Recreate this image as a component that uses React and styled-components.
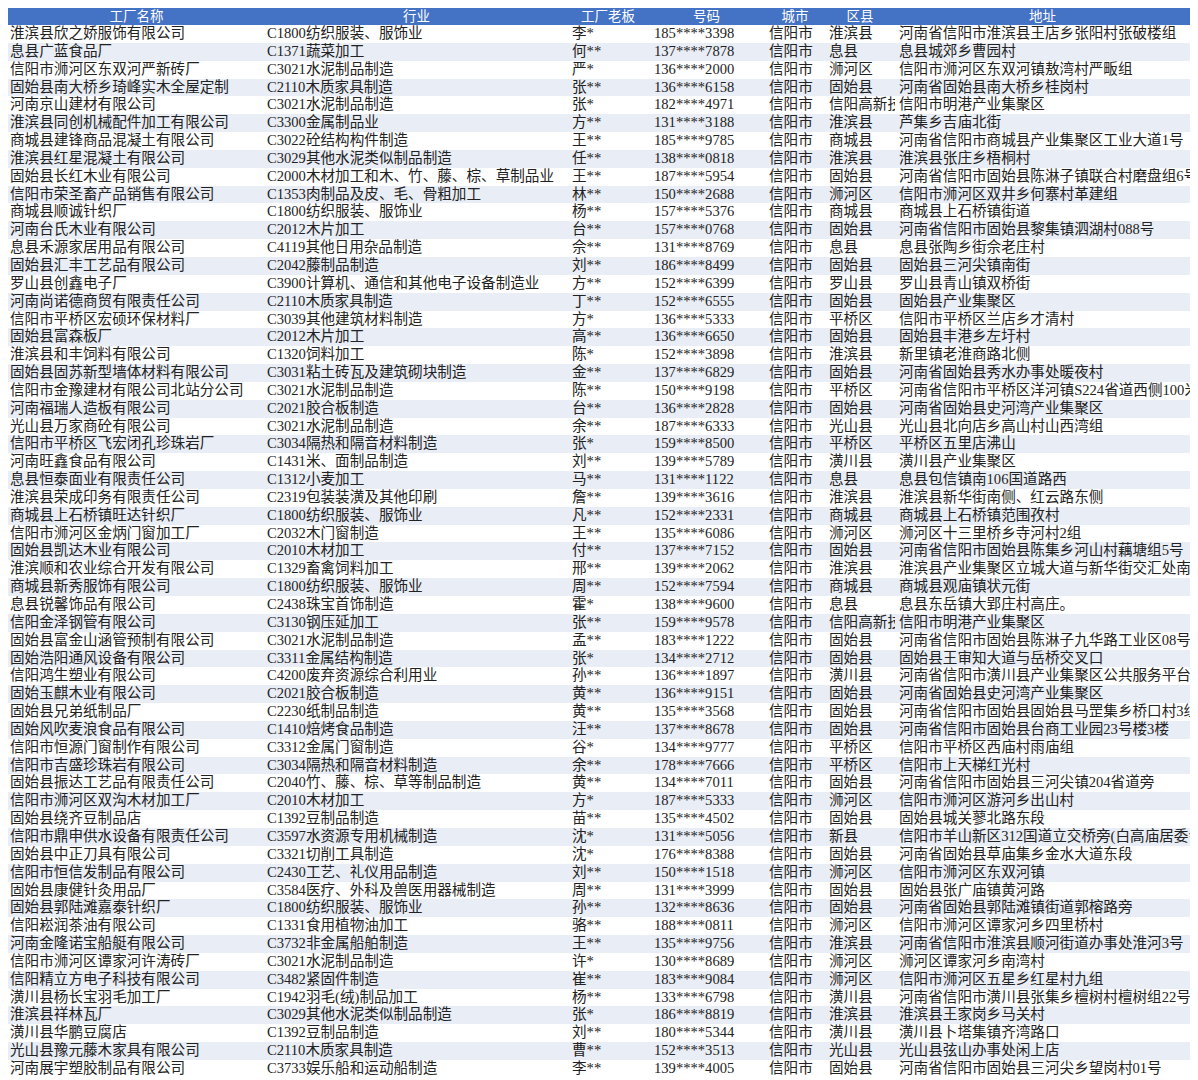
import React from "react";
import styled, { createGlobalStyle } from "styled-components";

const GlobalStyle = createGlobalStyle`
  body {
    margin: 8px 8px 0 8px;
    background: #fff;
    font-family: "Liberation Serif", "Noto Sans CJK SC", serif;
  }
`;

const Table = styled.table`
  width: 1182px;
  border-collapse: collapse;
  table-layout: fixed;
  font-size: 14.6px;
  color: #222;
`;

const HeadCell = styled.th`
  background: #4472c4;
  color: #fff;
  font-weight: normal;
  font-size: 13.5px;
  height: 17px;
  line-height: 17px;
  padding: 0;
  text-align: center;
  white-space: nowrap;
  overflow: hidden;
`;

const Row = styled.tr`
  background: ${(p) => (p.$alt ? "#e9edf5" : "#ffffff")};
`;

const Cell = styled.td`
  height: 17.85px;
  line-height: 17.85px;
  padding: 0 0 0 ${(p) => p.$pad || 2}px;
  white-space: nowrap;
  overflow: hidden;
`;

const cols = [
  { title: "工厂名称", w: 257 },
  { title: "行业", w: 303 },
  { title: "工厂老板", w: 80 },
  { title: "号码", w: 117 },
  { title: "城市", w: 60 },
  { title: "区县", w: 70 },
  { title: "地址", w: 295 },
];

const raw = `淮滨县欣之娇服饰有限公司|C1800纺织服装、服饰业|李*|185****3398|淮滨县|河南省信阳市淮滨县王店乡张阳村张破楼组
息县广蓝食品厂|C1371蔬菜加工|何**|137****7878|息县|息县城郊乡曹园村
信阳市浉河区东双河严新砖厂|C3021水泥制品制造|严*|136****2000|浉河区|信阳市浉河区东双河镇敖湾村严畈组
固始县南大桥乡琦峰实木全屋定制|C2110木质家具制造|张**|136****6158|固始县|河南省固始县南大桥乡桂岗村
河南京山建材有限公司|C3021水泥制品制造|张*|182****4971|信阳高新技术|信阳市明港产业集聚区
淮滨县同创机械配件加工有限公司|C3300金属制品业|方**|131****3188|淮滨县|芦集乡吉庙北街
商城县建锋商品混凝土有限公司|C3022砼结构构件制造|王**|185****9785|商城县|河南省信阳市商城县产业集聚区工业大道1号
淮滨县红星混凝土有限公司|C3029其他水泥类似制品制造|任**|138****0818|淮滨县|淮滨县张庄乡梧桐村
固始县长红木业有限公司|C2000木材加工和木、竹、藤、棕、草制品业|王**|187****5954|固始县|河南省信阳市固始县陈淋子镇联合村磨盘组6号
信阳市荣圣畜产品销售有限公司|C1353肉制品及皮、毛、骨粗加工|林**|150****2688|浉河区|信阳市浉河区双井乡何寨村革建组
商城县顺诚针织厂|C1800纺织服装、服饰业|杨**|157****5376|商城县|商城县上石桥镇街道
河南台氏木业有限公司|C2012木片加工|台**|157****0768|固始县|河南省信阳市固始县黎集镇泗湖村088号
息县禾源家居用品有限公司|C4119其他日用杂品制造|佘**|131****8769|息县|息县张陶乡街佘老庄村
固始县汇丰工艺品有限公司|C2042藤制品制造|刘**|186****8499|固始县|固始县三河尖镇南街
罗山县创鑫电子厂|C3900计算机、通信和其他电子设备制造业|方**|152****6399|罗山县|罗山县青山镇双桥街
河南尚诺德商贸有限责任公司|C2110木质家具制造|丁**|152****6555|固始县|固始县产业集聚区
信阳市平桥区宏硕环保材料厂|C3039其他建筑材料制造|方*|136****5333|平桥区|信阳市平桥区兰店乡才清村
固始县富森板厂|C2012木片加工|高**|136****6650|固始县|固始县丰港乡左圩村
淮滨县和丰饲料有限公司|C1320饲料加工|陈*|152****3898|淮滨县|新里镇老淮商路北侧
固始县固苏新型墙体材料有限公司|C3031粘土砖瓦及建筑砌块制造|金**|137****6829|固始县|河南省固始县秀水办事处暖夜村
信阳市金豫建材有限公司北站分公司|C3021水泥制品制造|陈**|150****9198|平桥区|河南省信阳市平桥区洋河镇S224省道西侧100米
河南福瑞人造板有限公司|C2021胶合板制造|台**|136****2828|固始县|河南省固始县史河湾产业集聚区
光山县万家商砼有限公司|C3021水泥制品制造|余**|187****6333|光山县|光山县北向店乡高山村山西湾组
信阳市平桥区飞宏闭孔珍珠岩厂|C3034隔热和隔音材料制造|张*|159****8500|平桥区|平桥区五里店沸山
河南旺鑫食品有限公司|C1431米、面制品制造|刘**|139****5789|潢川县|潢川县产业集聚区
息县恒泰面业有限责任公司|C1312小麦加工|马**|131****1122|息县|息县包信镇南106国道路西
淮滨县荣成印务有限责任公司|C2319包装装潢及其他印刷|詹**|139****3616|淮滨县|淮滨县新华街南侧、红云路东侧
商城县上石桥镇旺达针织厂|C1800纺织服装、服饰业|凡**|152****2331|商城县|商城县上石桥镇范围孜村
信阳市浉河区金炳门窗加工厂|C2032木门窗制造|王**|135****6086|浉河区|浉河区十三里桥乡寺河村2组
固始县凯达木业有限公司|C2010木材加工|付**|137****7152|固始县|河南省信阳市固始县陈集乡河山村藕塘组5号
淮滨顺和农业综合开发有限公司|C1329畜禽饲料加工|邢**|139****2062|淮滨县|淮滨县产业集聚区立城大道与新华街交汇处南
商城县新秀服饰有限公司|C1800纺织服装、服饰业|周**|152****7594|商城县|商城县观庙镇状元街
息县锐馨饰品有限公司|C2438珠宝首饰制造|霍*|138****9600|息县|息县东岳镇大郢庄村高庄。
信阳金泽钢管有限公司|C3130钢压延加工|张**|159****9578|信阳高新技术|信阳市明港产业集聚区
固始县富金山涵管预制有限公司|C3021水泥制品制造|孟**|183****1222|固始县|河南省信阳市固始县陈淋子九华路工业区08号
固始浩阳通风设备有限公司|C3311金属结构制造|张*|134****2712|固始县|固始县王审知大道与岳桥交叉口
信阳鸿生塑业有限公司|C4200废弃资源综合利用业|孙**|136****1897|潢川县|河南省信阳市潢川县产业集聚区公共服务平台
固始玉麒木业有限公司|C2021胶合板制造|黄**|136****9151|固始县|河南省固始县史河湾产业集聚区
固始县兄弟纸制品厂|C2230纸制品制造|黄**|135****3568|固始县|河南省信阳市固始县固始县马罡集乡桥口村3组
固始风吹麦浪食品有限公司|C1410焙烤食品制造|汪**|137****8678|固始县|河南省信阳市固始县台商工业园23号楼3楼
信阳市恒源门窗制作有限公司|C3312金属门窗制造|谷*|134****9777|平桥区|信阳市平桥区西庙村雨庙组
信阳市吉盛珍珠岩有限公司|C3034隔热和隔音材料制造|余**|178****7666|平桥区|信阳市上天梯红光村
固始县振达工艺品有限责任公司|C2040竹、藤、棕、草等制品制造|黄**|134****7011|固始县|河南省信阳市固始县三河尖镇204省道旁
信阳市浉河区双沟木材加工厂|C2010木材加工|方*|187****5333|浉河区|信阳市浉河区游河乡出山村
固始县绕齐豆制品店|C1392豆制品制造|苗**|135****4502|固始县|固始县城关蓼北路东段
信阳市鼎申供水设备有限责任公司|C3597水资源专用机械制造|沈*|131****5056|新县|信阳市羊山新区312国道立交桥旁(白高庙居委会)
固始县中正刀具有限公司|C3321切削工具制造|沈*|176****8388|固始县|河南省固始县草庙集乡金水大道东段
信阳市恒信发制品有限公司|C2430工艺、礼仪用品制造|刘**|150****1518|浉河区|信阳市浉河区东双河镇
固始县康健针灸用品厂|C3584医疗、外科及兽医用器械制造|周**|131****3999|固始县|固始县张广庙镇黄河路
固始县郭陆滩嘉泰针织厂|C1800纺织服装、服饰业|孙**|132****8636|固始县|河南省固始县郭陆滩镇街道郭榕路旁
信阳崧润茶油有限公司|C1331食用植物油加工|骆**|188****0811|浉河区|信阳市浉河区谭家河乡四里桥村
河南金隆诺宝船艇有限公司|C3732非金属船舶制造|王**|135****9756|淮滨县|河南省信阳市淮滨县顺河街道办事处淮河3号
信阳市浉河区谭家河许涛砖厂|C3021水泥制品制造|许*|130****8689|浉河区|浉河区谭家河乡南湾村
信阳精立方电子科技有限公司|C3482紧固件制造|崔**|183****9084|浉河区|信阳市浉河区五星乡红星村九组
潢川县杨长宝羽毛加工厂|C1942羽毛(绒)制品加工|杨**|133****6798|潢川县|河南省信阳市潢川县张集乡檀树村檀树组22号
淮滨县祥林瓦厂|C3029其他水泥类似制品制造|张*|186****8819|淮滨县|淮滨县王家岗乡马关村
潢川县华鹏豆腐店|C1392豆制品制造|刘**|180****5344|潢川县|潢川县卜塔集镇齐湾路口
光山县豫元藤木家具有限公司|C2110木质家具制造|曹**|152****3513|光山县|光山县弦山办事处闲上店
河南展宇塑胶制品有限公司|C3733娱乐船和运动船制造|李**|139****4005|固始县|河南省信阳市固始县三河尖乡望岗村01号`;

const rows = raw.split("\n").map((l) => {
  const [name, ind, boss, phone, dist, addr] = l.split("|");
  return [name, ind, boss, phone, "信阳市", dist, addr];
});

const pads = [2, 2, 4, 6, 4, 4, 4];

export default function App() {
  return (
    <>
      <GlobalStyle />
      <Table>
        <colgroup>
          {cols.map((c) => (
            <col key={c.title} style={{ width: c.w }} />
          ))}
        </colgroup>
        <thead>
          <tr>
            {cols.map((c) => (
              <HeadCell key={c.title}>{c.title}</HeadCell>
            ))}
          </tr>
        </thead>
        <tbody>
          {rows.map((r, i) => (
            <Row key={i} $alt={i % 2 === 1}>
              {r.map((v, j) => (
                <Cell key={j} $pad={pads[j]}>
                  {v}
                </Cell>
              ))}
            </Row>
          ))}
        </tbody>
      </Table>
    </>
  );
}
